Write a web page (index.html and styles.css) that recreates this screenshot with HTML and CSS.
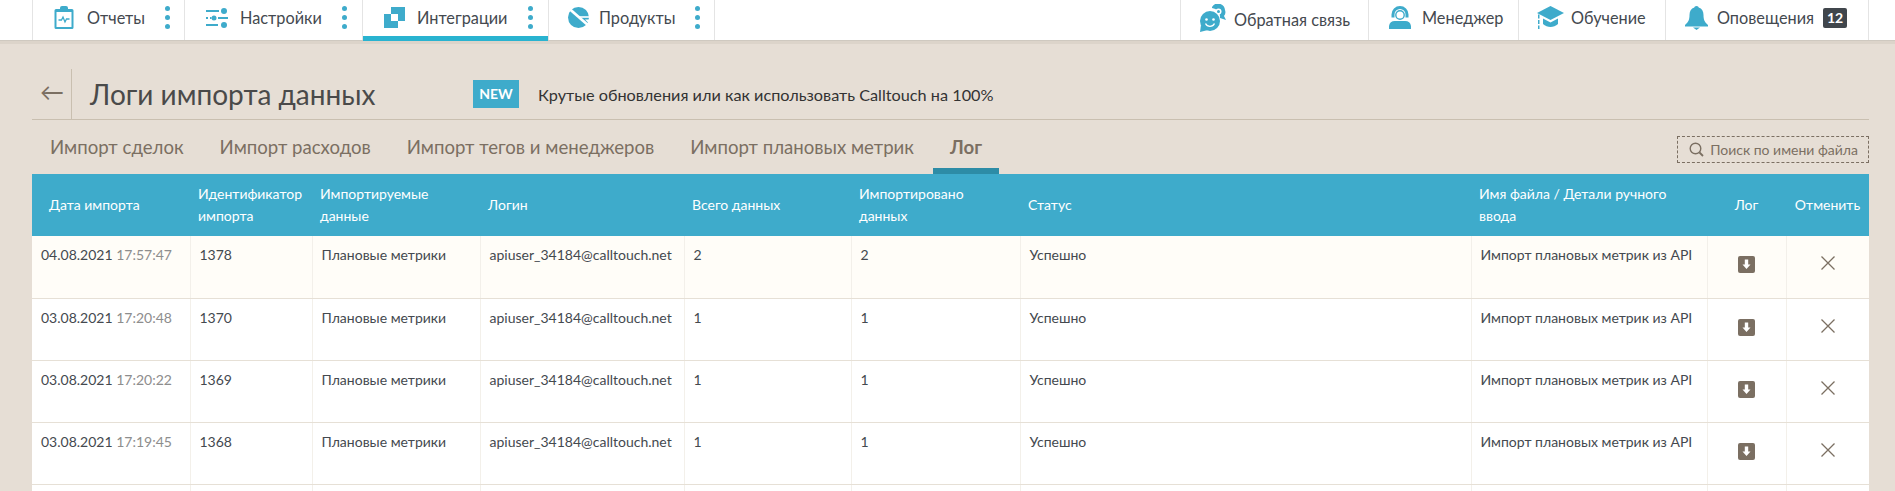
FILE: index.html
```html
<!DOCTYPE html>
<html lang="ru">
<head>
    <meta charset="UTF-8">
    <title>Логи импорта данных</title>
    <link rel="stylesheet" href="styles.css">
</head>
<body>
    <nav class="topnav">
        <div class="nav-group">
            <a class="nav-item w-reports">
                <svg class="ico" width="20" height="23" viewBox="0 0 20 23"><path d="M2 3h4V2a2 2 0 0 1 2-2h4a2 2 0 0 1 2 2v1h4a1.500 1.500 0 0 1 1.500 1.500v17A1.500 1.500 0 0 1 18 23H2a1.500 1.500 0 0 1-1.500-1.500v-17A1.500 1.500 0 0 1 2 3z" fill="#3eabcb"/><rect x="2.500" y="6" width="15" height="15" fill="#fff"/><path d="M4.500 14h3l1.500-3 2 5 1.500-3h3" fill="none" stroke="#3eabcb" stroke-width="1.300"/></svg>
                <span class="nav-text">Отчеты</span>
                <span class="dots"><i></i><i></i><i></i></span>
            </a>
            <a class="nav-item w-settings">
                <svg class="ico" width="22" height="22" viewBox="0 0 22 22"><g fill="#3eabcb"><rect x="0" y="3" width="13" height="2"/><circle cx="18" cy="4" r="3"/><rect x="0" y="10" width="2" height="2"/><rect x="4" y="10" width="1.500" height="2"/><circle cx="8" cy="11" r="2.500"/><rect x="12" y="10" width="10" height="2"/><rect x="0" y="17" width="12" height="2"/><circle cx="18" cy="18" r="3"/></g></svg>
                <span class="nav-text">Настройки</span>
                <span class="dots"><i></i><i></i><i></i></span>
            </a>
            <a class="nav-item w-integr active">
                <svg class="ico" width="21" height="21" viewBox="0 0 21 21"><path d="M7 0h14v14h-7V7H7z" fill="#3eabcb"/><path d="M0 7h7v7h7v7H0z" fill="#3eabcb"/></svg>
                <span class="nav-text">Интеграции</span>
                <span class="dots"><i></i><i></i><i></i></span>
            </a>
            <a class="nav-item w-products">
                <svg class="ico" width="21" height="21" viewBox="0 0 21 21"><circle cx="10.500" cy="10.500" r="10.500" fill="#3eabcb"/><path d="M1 1.500L21 19" stroke="#fff" stroke-width="2.800"/><path d="M11 10h10" stroke="#fff" stroke-width="1.600"/><path d="M17 12.500h4v4z" fill="#fff"/></svg>
                <span class="nav-text">Продукты</span>
                <span class="dots"><i></i><i></i><i></i></span>
            </a>
        </div>
        <div class="nav-group">
            <a class="nav-item w-feedback">
                <svg class="ico" width="27" height="28" viewBox="0 0 27 28"><path d="M12 3a7 7 0 0 1 13 3 6 6 0 0 1-1 6l2 4-6-2a9 9 0 0 0-8-10z" fill="#3eabcb"/><circle cx="18.500" cy="7.500" r="3" fill="#fff"/><circle cx="18.500" cy="7.500" r="1.500" fill="#3eabcb"/><circle cx="10" cy="17" r="10" fill="#3eabcb"/><path d="M1 21l-1 7 8-2z" fill="#3eabcb"/><circle cx="6.500" cy="15.500" r="1.300" fill="#fff"/><circle cx="13.500" cy="15.500" r="1.300" fill="#fff"/><path d="M5.500 19.500a5 5 0 0 0 9 0" fill="none" stroke="#fff" stroke-width="1.300"/></svg>
                <span class="nav-text low">Обратная связь</span>
            </a>
            <a class="nav-item w-manager">
                <svg class="ico" width="22" height="23" viewBox="0 0 22 23"><path d="M11 0a8.500 8.500 0 0 1 8.500 8.500v3h-3v-3a5.500 5.500 0 0 0-11 0v3h-3v-3A8.500 8.500 0 0 1 11 0z" fill="#3eabcb"/><circle cx="11" cy="9" r="4.200" fill="none" stroke="#3eabcb" stroke-width="1.400"/><path d="M0 23v-3a6 6 0 0 1 6-5h10a6 6 0 0 1 6 5v3z" fill="#3eabcb"/></svg>
                <span class="nav-text">Менеджер</span>
            </a>
            <a class="nav-item w-learn">
                <svg class="ico" width="27" height="23" viewBox="0 0 27 23"><path d="M13.500 0L27 7l-13.500 7L0 7z" fill="#3eabcb"/><path d="M6 12.500l7.500 4 7.500-4V18c-2 2-5 3-7.500 3S8 20 6 18z" fill="#3eabcb"/><path d="M1 8.500h1.500v4H1zM1 14h1.500v4H1zM1 19.500h1.500V23H1z" fill="#3eabcb"/></svg>
                <span class="nav-text">Обучение</span>
            </a>
            <a class="nav-item w-notify">
                <svg class="ico" width="23" height="24" viewBox="0 0 23 24"><path d="M11.500 0c1.500 0 2 .8 2.200 1.500C17 2.500 18.500 5.500 18.500 9c0 4 .8 7 4.500 10v1.500H0V19c3.700-3 4.500-6 4.500-10 0-3.500 1.500-6.500 4.800-7.500C9.500.8 10 0 11.500 0z" fill="#3eabcb"/><path d="M8 21.500h7L11.500 24z" fill="#3eabcb"/></svg>
                <span class="nav-text">Оповещения</span>
                <span class="count">12</span>
            </a>
        </div>
    </nav>

    <main class="content">
        <div class="title-row">
            <a class="back">←</a>
            <h1>Логи импорта данных</h1>
            <span class="new-badge">NEW</span>
            <span class="promo">Крутые обновления или как использовать Calltouch на 100%</span>
        </div>

        <div class="tabs-row">
            <div class="tabs">
                <a class="tab">Импорт сделок</a>
                <a class="tab">Импорт расходов</a>
                <a class="tab">Импорт тегов и менеджеров</a>
                <a class="tab">Импорт плановых метрик</a>
                <a class="tab current">Лог</a>
            </div>
            <div class="search">
                <svg width="15" height="15" viewBox="0 0 15 15"><circle cx="6.500" cy="6.500" r="5.300" fill="none" stroke="#7b6f62" stroke-width="1.400"/><path d="M10.500 10.500l3.500 3.500" stroke="#7b6f62" stroke-width="1.800"/></svg>
                <span>Поиск по имени файла</span>
            </div>
        </div>

        <table class="log-table">
            <colgroup>
                <col class="c1"><col class="c2"><col class="c3"><col class="c4"><col class="c5">
                <col class="c6"><col class="c7"><col class="c8"><col class="c9"><col class="c10">
            </colgroup>
            <thead>
                <tr>
                    <th class="first">Дата импорта</th>
                    <th>Идентификатор<br>импорта</th>
                    <th>Импортируемые<br>данные</th>
                    <th>Логин</th>
                    <th>Всего данных</th>
                    <th>Импортировано<br>данных</th>
                    <th>Статус</th>
                    <th>Имя файла / Детали ручного<br>ввода</th>
                    <th class="center">Лог</th>
                    <th class="center">Отменить</th>
                </tr>
            </thead>
            <tbody>
                <tr class="fresh">
                    <td>04.08.2021 <span class="time">17:57:47</span></td>
                    <td>1378</td>
                    <td>Плановые метрики</td>
                    <td>apiuser_34184@calltouch.net</td>
                    <td>2</td>
                    <td>2</td>
                    <td>Успешно</td>
                    <td>Импорт плановых метрик из API</td>
                    <td class="center"><svg class="act" width="17" height="17" viewBox="0 0 17 17"><rect width="17" height="17" rx="2" fill="#7b6f62"/><path d="M6.800 3.500h3.400v5h2.300l-4 4.500-4-4.500h2.300z" fill="#fff"/></svg></td>
                    <td class="center"><svg class="act" width="14" height="14" viewBox="0 0 14 14"><path d="M.5.500l13 13M13.500.500l-13 13" stroke="#7b6f62" stroke-width="1.300"/></svg></td>
                </tr>
                <tr>
                    <td>03.08.2021 <span class="time">17:20:48</span></td>
                    <td>1370</td>
                    <td>Плановые метрики</td>
                    <td>apiuser_34184@calltouch.net</td>
                    <td>1</td>
                    <td>1</td>
                    <td>Успешно</td>
                    <td>Импорт плановых метрик из API</td>
                    <td class="center"><svg class="act" width="17" height="17" viewBox="0 0 17 17"><rect width="17" height="17" rx="2" fill="#7b6f62"/><path d="M6.800 3.500h3.400v5h2.300l-4 4.500-4-4.500h2.300z" fill="#fff"/></svg></td>
                    <td class="center"><svg class="act" width="14" height="14" viewBox="0 0 14 14"><path d="M.5.500l13 13M13.500.500l-13 13" stroke="#7b6f62" stroke-width="1.300"/></svg></td>
                </tr>
                <tr>
                    <td>03.08.2021 <span class="time">17:20:22</span></td>
                    <td>1369</td>
                    <td>Плановые метрики</td>
                    <td>apiuser_34184@calltouch.net</td>
                    <td>1</td>
                    <td>1</td>
                    <td>Успешно</td>
                    <td>Импорт плановых метрик из API</td>
                    <td class="center"><svg class="act" width="17" height="17" viewBox="0 0 17 17"><rect width="17" height="17" rx="2" fill="#7b6f62"/><path d="M6.800 3.500h3.400v5h2.300l-4 4.500-4-4.500h2.300z" fill="#fff"/></svg></td>
                    <td class="center"><svg class="act" width="14" height="14" viewBox="0 0 14 14"><path d="M.5.500l13 13M13.500.500l-13 13" stroke="#7b6f62" stroke-width="1.300"/></svg></td>
                </tr>
                <tr>
                    <td>03.08.2021 <span class="time">17:19:45</span></td>
                    <td>1368</td>
                    <td>Плановые метрики</td>
                    <td>apiuser_34184@calltouch.net</td>
                    <td>1</td>
                    <td>1</td>
                    <td>Успешно</td>
                    <td>Импорт плановых метрик из API</td>
                    <td class="center"><svg class="act" width="17" height="17" viewBox="0 0 17 17"><rect width="17" height="17" rx="2" fill="#7b6f62"/><path d="M6.800 3.500h3.400v5h2.300l-4 4.500-4-4.500h2.300z" fill="#fff"/></svg></td>
                    <td class="center"><svg class="act" width="14" height="14" viewBox="0 0 14 14"><path d="M.5.500l13 13M13.500.500l-13 13" stroke="#7b6f62" stroke-width="1.300"/></svg></td>
                </tr>
                <tr class="stub">
                    <td></td><td></td><td></td><td></td><td></td><td></td><td></td><td></td><td></td><td></td>
                </tr>
            </tbody>
        </table>
    </main>
</body>
</html>
```

FILE: styles.css
```css
html, body {
    margin: 0;
    padding: 0;
    height: 100%;
    overflow: hidden;
}
body {
    font-family: Lato, "Noto Sans", sans-serif;
    background-color: #e6ded5;
    color: #44494f;
}
.topnav {
    display: flex;
    justify-content: space-between;
    height: 40px;
    padding: 0 26px 0 32px;
    background: #fff;
    box-shadow: 0 1px 0 #cfc9c0, 0 4px 0 #dcd4ca;
}
.nav-group {
    display: flex;
    border-left: 1px solid #e4e4e4;
}
.nav-item {
    display: flex;
    align-items: center;
    box-sizing: border-box;
    height: 40px;
    border-right: 1px solid #e4e4e4;
    font-size: 16.3px;
    position: relative;
}
.ico {
    flex: none;
    margin-bottom: 5px;
}
.nav-text {
    margin-bottom: 6px;
}
.nav-text.low {
    margin-bottom: 2px;
}
.dots {
    display: flex;
    flex-direction: column;
    gap: 4px;
    margin-left: auto;
    margin-bottom: 5px;
}
.dots i {
    display: block;
    width: 5px;
    height: 5px;
    border-radius: 50%;
    background: #3eabcb;
}
.w-reports { width: 152px; padding: 0 14px 0 21px; }
.w-reports .nav-text { margin-left: 13px; }
.w-settings { width: 178px; padding: 0 15px 0 21px; }
.w-settings .nav-text { margin-left: 12px; }
.w-integr { width: 186px; padding: 0 15px 0 21px; }
.w-integr .nav-text { margin-left: 12px; }
.w-products { width: 166px; padding: 0 14px 0 19px; }
.w-products .nav-text { margin-left: 10px; }
.w-feedback { width: 188px; padding-left: 19px; }
.w-feedback .nav-text { margin-left: 7px; }
.w-manager { width: 150px; padding-left: 20px; }
.w-manager .nav-text { margin-left: 11px; }
.w-learn { width: 147px; padding-left: 18px; }
.w-learn .nav-text { margin-left: 7px; }
.w-notify { width: 203px; padding-left: 19px; }
.w-notify .nav-text { margin-left: 9px; }
.active::after {
    content: "";
    position: absolute;
    left: 0;
    right: 0;
    bottom: -1px;
    height: 5px;
    background: #29b3d0;
}
.count {
    margin: 0 0 4px 9px;
    width: 24px;
    height: 20px;
    line-height: 20px;
    border-radius: 2px;
    background: #40464c;
    color: #fff;
    font-size: 14px;
    font-weight: 700;
    text-align: center;
}
.content {
    padding: 29px 26px 0 32px;
}
.title-row {
    display: flex;
    align-items: center;
    height: 50px;
    border-bottom: 1px solid #c9bfb0;
}
.back {
    width: 40px;
    height: 50px;
    line-height: 46px;
    box-sizing: border-box;
    padding-left: 8px;
    border-right: 1px solid #c9bfb0;
    font-size: 24px;
    color: #7b6f62;
}
h1 {
    margin: 0 0 0 18px;
    width: 383px;
    font-size: 28px;
    font-weight: 400;
    color: #4a4a4a;
}
.new-badge {
    width: 46px;
    height: 28px;
    line-height: 28px;
    background: #3eabcb;
    color: #fff;
    font-size: 14px;
    font-weight: 700;
    text-align: center;
}
.promo {
    margin-left: 19px;
    font-size: 16.25px;
    color: #333;
}
.tabs-row {
    display: flex;
    justify-content: space-between;
    height: 54px;
}
.tabs {
    display: flex;
    gap: 36px;
    padding-left: 18px;
}
.tab {
    font-size: 18.6px;
    line-height: 54px;
    color: #7b6f62;
    position: relative;
}
.tab.current {
    font-weight: 700;
}
.tab.current::after {
    content: "";
    position: absolute;
    left: -17px;
    right: -17px;
    bottom: 0;
    height: 6px;
    background: #2d8ca6;
}
.search {
    display: flex;
    align-items: center;
    gap: 6px;
    box-sizing: border-box;
    height: 27px;
    margin-top: 16px;
    padding: 0 10px 0 11px;
    border: 1px dashed #7b6f62;
    font-size: 14px;
    color: #7b6f62;
}
.log-table {
    width: 1837px;
    border-collapse: collapse;
    table-layout: fixed;
    font-size: 14px;
}
.c1 { width: 158px; }
.c2 { width: 122px; }
.c3 { width: 168px; }
.c4 { width: 204px; }
.c5 { width: 167px; }
.c6 { width: 169px; }
.c7 { width: 451px; }
.c8 { width: 236px; }
.c9 { width: 79px; }
.c10 { width: 83px; }
th {
    height: 62px;
    padding: 0 8px;
    background: #3eabcb;
    color: #fff;
    font-weight: 400;
    line-height: 22px;
    text-align: left;
    white-space: nowrap;
}
th.first {
    padding-left: 17px;
}
td {
    height: 62px;
    box-sizing: border-box;
    padding: 9px 9px 0;
    vertical-align: top;
    line-height: 20px;
    background: #fff;
    border-right: 1px solid #f3f0ea;
    border-bottom: 1px solid #e6e0d6;
    white-space: nowrap;
}
.fresh td {
    background: #fffdf8;
}
.stub td {
    height: 7px;
    padding: 0;
    border-bottom: none;
}
.time {
    color: #8d8d8d;
}
th.center, td.center {
    text-align: center;
    padding-left: 0;
    padding-right: 0;
}
td:last-child {
    border-right: none;
}
.act {
    display: block;
    margin: 11px auto 0;
}
```
